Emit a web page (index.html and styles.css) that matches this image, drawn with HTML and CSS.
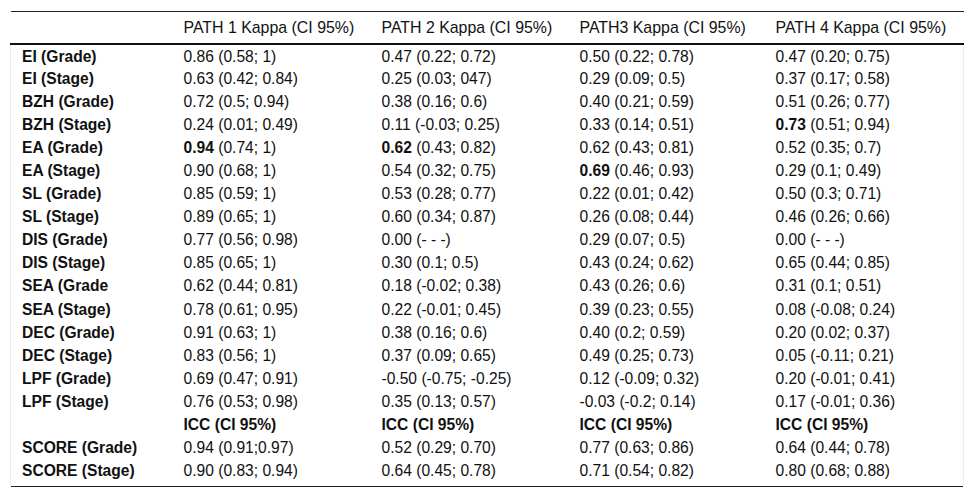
FILE: index.html
```html
<!DOCTYPE html>
<html>
<head>
<meta charset="utf-8">
<link rel="stylesheet" href="styles.css">
</head>
<body>
<div class="wrap">
<table class="kappa">
<colgroup>
<col class="c1"><col class="c2"><col class="c3"><col class="c4"><col class="c5">
</colgroup>
<thead>
<tr><th></th><th>PATH 1 Kappa (CI 95%)</th><th>PATH 2 Kappa (CI 95%)</th><th>PATH3 Kappa (CI 95%)</th><th>PATH 4 Kappa (CI 95%)</th></tr>
</thead>
<tbody>
<tr><th>EI (Grade)</th><td>0.86 (0.58; 1)</td><td>0.47 (0.22; 0.72)</td><td>0.50 (0.22; 0.78)</td><td>0.47 (0.20; 0.75)</td></tr>
<tr><th>EI (Stage)</th><td>0.63 (0.42; 0.84)</td><td>0.25 (0.03; 047)</td><td>0.29 (0.09; 0.5)</td><td>0.37 (0.17; 0.58)</td></tr>
<tr><th>BZH (Grade)</th><td>0.72 (0.5; 0.94)</td><td>0.38 (0.16; 0.6)</td><td>0.40 (0.21; 0.59)</td><td>0.51 (0.26; 0.77)</td></tr>
<tr><th>BZH (Stage)</th><td>0.24 (0.01; 0.49)</td><td>0.11 (-0.03; 0.25)</td><td>0.33 (0.14; 0.51)</td><td><b>0.73</b> (0.51; 0.94)</td></tr>
<tr><th>EA (Grade)</th><td><b>0.94</b> (0.74; 1)</td><td><b>0.62</b> (0.43; 0.82)</td><td>0.62 (0.43; 0.81)</td><td>0.52 (0.35; 0.7)</td></tr>
<tr><th>EA (Stage)</th><td>0.90 (0.68; 1)</td><td>0.54 (0.32; 0.75)</td><td><b>0.69</b> (0.46; 0.93)</td><td>0.29 (0.1; 0.49)</td></tr>
<tr><th>SL (Grade)</th><td>0.85 (0.59; 1)</td><td>0.53 (0.28; 0.77)</td><td>0.22 (0.01; 0.42)</td><td>0.50 (0.3; 0.71)</td></tr>
<tr><th>SL (Stage)</th><td>0.89 (0.65; 1)</td><td>0.60 (0.34; 0.87)</td><td>0.26 (0.08; 0.44)</td><td>0.46 (0.26; 0.66)</td></tr>
<tr><th>DIS (Grade)</th><td>0.77 (0.56; 0.98)</td><td>0.00 (- - -)</td><td>0.29 (0.07; 0.5)</td><td>0.00 (- - -)</td></tr>
<tr><th>DIS (Stage)</th><td>0.85 (0.65; 1)</td><td>0.30 (0.1; 0.5)</td><td>0.43 (0.24; 0.62)</td><td>0.65 (0.44; 0.85)</td></tr>
<tr><th>SEA (Grade</th><td>0.62 (0.44; 0.81)</td><td>0.18 (-0.02; 0.38)</td><td>0.43 (0.26; 0.6)</td><td>0.31 (0.1; 0.51)</td></tr>
<tr><th>SEA (Stage)</th><td>0.78 (0.61; 0.95)</td><td>0.22 (-0.01; 0.45)</td><td>0.39 (0.23; 0.55)</td><td>0.08 (-0.08; 0.24)</td></tr>
<tr><th>DEC (Grade)</th><td>0.91 (0.63; 1)</td><td>0.38 (0.16; 0.6)</td><td>0.40 (0.2; 0.59)</td><td>0.20 (0.02; 0.37)</td></tr>
<tr><th>DEC (Stage)</th><td>0.83 (0.56; 1)</td><td>0.37 (0.09; 0.65)</td><td>0.49 (0.25; 0.73)</td><td>0.05 (-0.11; 0.21)</td></tr>
<tr><th>LPF (Grade)</th><td>0.69 (0.47; 0.91)</td><td>-0.50 (-0.75; -0.25)</td><td>0.12 (-0.09; 0.32)</td><td>0.20 (-0.01; 0.41)</td></tr>
<tr><th>LPF (Stage)</th><td>0.76 (0.53; 0.98)</td><td>0.35 (0.13; 0.57)</td><td>-0.03 (-0.2; 0.14)</td><td>0.17 (-0.01; 0.36)</td></tr>
<tr class="sub"><th></th><th>ICC (CI 95%)</th><th>ICC (CI 95%)</th><th>ICC (CI 95%)</th><th>ICC (CI 95%)</th></tr>
<tr><th>SCORE (Grade)</th><td>0.94 (0.91;0.97)</td><td>0.52 (0.29; 0.70)</td><td>0.77 (0.63; 0.86)</td><td>0.64 (0.44; 0.78)</td></tr>
<tr class="last"><th>SCORE (Stage)</th><td>0.90 (0.83; 0.94)</td><td>0.64 (0.45; 0.78)</td><td>0.71 (0.54; 0.82)</td><td>0.80 (0.68; 0.88)</td></tr>
</tbody>
</table>
</div>
</body>
</html>
```
FILE: styles.css
```css
html, body {
  margin: 0;
  padding: 0;
  background: #fff;
}
.wrap {
  padding: 11px 9px 0 10px;
}
.kappa {
  width: 953px;
  border-collapse: collapse;
  table-layout: fixed;
  font-family: "Liberation Sans", Arial, sans-serif;
  font-size: 15.6px;
  line-height: 18px;
  color: #111;
  border-top: 1px solid #222;
  border-bottom: 1px solid #222;
}
.c1 { width: 162px; }
.c2 { width: 198px; }
.c3 { width: 198px; }
.c4 { width: 196px; }
.c5 { width: 199px; }
.kappa th, .kappa td {
  padding: 0 0 0 11px;
  text-align: left;
  white-space: nowrap;
  vertical-align: middle;
}
.kappa thead th {
  font-weight: normal;
  font-size: 15.9px;
  height: 31px;
  border-bottom: 2px solid #111;
}
.kappa tbody tr {
  height: 23.1px;
}
.kappa tbody th {
  font-weight: bold;
}
.kappa tbody tr:first-child th, .kappa tbody tr:first-child td {
  padding-top: 1px;
}
.kappa tbody tr.last {
  height: 27px;
}
.kappa tbody tr.last th, .kappa tbody tr.last td {
  padding-bottom: 4px;
}
.kappa tbody th:first-child {
  border-left: 1px solid #ececec;
}
.kappa tbody td:last-child, .kappa tbody tr.sub th:last-child {
  border-right: 1px solid #ececec;
}
.kappa b {
  font-weight: bold;
}
```
